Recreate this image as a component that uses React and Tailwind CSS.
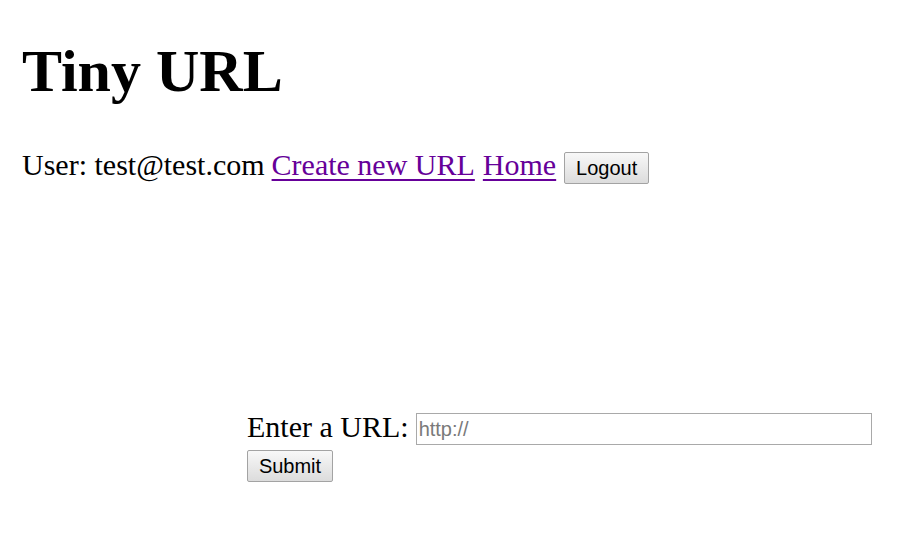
import React from 'react';

const serif = { fontFamily: '"Liberation Serif", "Times New Roman", serif' };

const btn =
  'h-[32px] px-[10px] border border-[#a3a3a3] rounded-[2px] bg-gradient-to-b from-[#f8f8f8] to-[#dcdcdc] text-[20px] leading-none text-black font-["Liberation_Sans",Arial,sans-serif]';

export default function App() {
  return (
    <div className="w-[903px] h-[545px] bg-white text-black overflow-hidden" style={serif}>
      <div className="pl-[22px] pt-[36px]">
        <h1 className="text-[60px] font-bold leading-[70px]">Tiny URL</h1>

        <div className="mt-[42px] flex items-start text-[30px] leading-[34px]">
          <span>User: test@test.com</span>
          <a href="#" className="ml-[7px] text-[#660099] underline decoration-[2px] underline-offset-[4px]">
            Create new URL
          </a>
          <a href="#" className="ml-[8px] text-[#660099] underline decoration-[2px] underline-offset-[4px]">
            Home
          </a>
          <button className={btn + ' ml-[8px] mt-[4px] w-[85px]'}>Logout</button>
        </div>
      </div>

      {/* form */}
      <form className="ml-[247px] mt-[225px]">
        <div className="flex items-center gap-[7px]">
          <label className="text-[30px] leading-[34px]">Enter a URL:</label>
          <input
            type="text"
            placeholder="http://"
            className="mt-[4px] w-[456px] h-[32px] border border-[#a9a9a9] px-[2px] text-[20px] outline-none placeholder:text-[#7a7a7a] font-['Liberation_Sans',Arial,sans-serif]"
          />
        </div>
        <button type="button" className={btn + ' mt-[5px] w-[86px]'}>
          Submit
        </button>
      </form>
    </div>
  );
}
